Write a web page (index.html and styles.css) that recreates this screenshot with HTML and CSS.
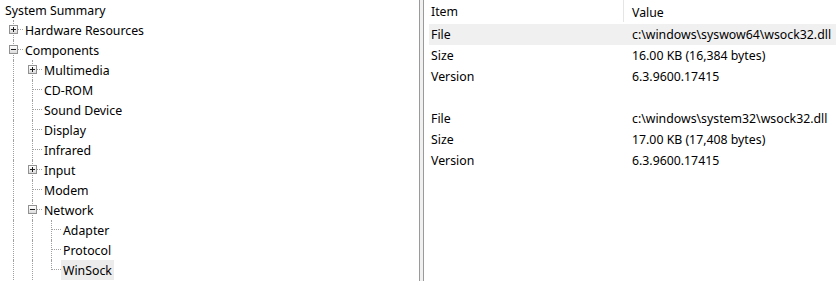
FILE: index.html
```html
<!DOCTYPE html>
<html lang="en">
<head>
  <meta charset="UTF-8">
  <title>System Information</title>
  <link rel="stylesheet" href="styles.css">
</head>
<body>

<div class="window">
  <div class="tree">
    <div class="row root"><span class="label">System Summary</span></div>
    <div class="row"><span class="g"><span class="box plus"></span></span><span class="label">Hardware Resources</span></div>
    <div class="row"><span class="g"><span class="box minus"></span></span><span class="label">Components</span></div>
    <div class="row"><span class="g line"></span><span class="g"><span class="box plus"></span></span><span class="label">Multimedia</span></div>
    <div class="row"><span class="g line"></span><span class="g"></span><span class="label">CD-ROM</span></div>
    <div class="row"><span class="g line"></span><span class="g"></span><span class="label">Sound Device</span></div>
    <div class="row"><span class="g line"></span><span class="g"></span><span class="label">Display</span></div>
    <div class="row"><span class="g line"></span><span class="g"></span><span class="label">Infrared</span></div>
    <div class="row"><span class="g line"></span><span class="g"><span class="box plus"></span></span><span class="label">Input</span></div>
    <div class="row"><span class="g line"></span><span class="g"></span><span class="label">Modem</span></div>
    <div class="row"><span class="g line"></span><span class="g"><span class="box minus"></span></span><span class="label">Network</span></div>
    <div class="row"><span class="g line"></span><span class="g line"></span><span class="g"></span><span class="label">Adapter</span></div>
    <div class="row"><span class="g line"></span><span class="g line"></span><span class="g"></span><span class="label">Protocol</span></div>
    <div class="row"><span class="g line"></span><span class="g line"></span><span class="g elbow"></span><span class="label selected">WinSock</span></div>
  </div>

  <div class="splitter"></div>

  <div class="details">
    <div class="header">
      <div class="col first">Item</div>
      <div class="col">Value</div>
    </div>
    <div class="items">
      <div class="item hot"><span>File</span><span>c:\windows\syswow64\wsock32.dll</span></div>
      <div class="item"><span>Size</span><span>16.00 KB (16,384 bytes)</span></div>
      <div class="item"><span>Version</span><span>6.3.9600.17415</span></div>
      <div class="item"><span></span><span></span></div>
      <div class="item"><span>File</span><span>c:\windows\system32\wsock32.dll</span></div>
      <div class="item"><span>Size</span><span>17.00 KB (17,408 bytes)</span></div>
      <div class="item"><span>Version</span><span>6.3.9600.17415</span></div>
    </div>
  </div>
</div>

</body>
</html>
```

FILE: styles.css
```css
body {
  margin: 0;
  background-color: #fff;
  color: #000;
  font-family: "Noto Sans", "Open Sans", sans-serif;
  font-size: 12.3px;
}
.window {
  display: flex;
  height: 281px;
  overflow: hidden;
}
.tree {
  width: 419px;
  flex: none;
  padding-left: 4px;
  box-sizing: border-box;
  background-color: #fff;
}
.row {
  display: flex;
  height: 20px;
  align-items: center;
}
.root {
  margin-left: -1px;
}
.label {
  padding: 2px 2px 0;
  line-height: 18px;
  white-space: nowrap;
}
.label.selected {
  background-color: #ececec;
}
.g {
  display: grid;
  grid-template-columns: 10px 9px;
  grid-template-rows: 10px 10px;
  width: 19px;
  height: 20px;
  flex: none;
}
.g::before {
  content: "";
  grid-column: 1;
  grid-row: 1 / 3;
  border-right: 1px dotted #a0a0a0;
}
.g::after {
  content: "";
  grid-column: 2;
  grid-row: 1;
  border-bottom: 1px dotted #a0a0a0;
}
.g.line::after {
  display: none;
}
.g.elbow::before {
  grid-row: 1;
}
.box {
  grid-column: 1 / 3;
  grid-row: 1 / 3;
  align-self: start;
  justify-self: start;
  margin: 5px 0 0 5px;
  width: 9px;
  height: 9px;
  box-sizing: border-box;
  border: 1px solid #919191;
  z-index: 1;
}
.box.plus {
  background:
    linear-gradient(#1e1e1e, #1e1e1e) center / 5px 1px no-repeat,
    linear-gradient(#1e1e1e, #1e1e1e) center / 1px 5px no-repeat,
    linear-gradient(#fff, #dcdcdc);
}
.box.minus {
  background:
    linear-gradient(#1e1e1e, #1e1e1e) center / 5px 1px no-repeat,
    linear-gradient(#fff, #dcdcdc);
}
.splitter {
  width: 3px;
  flex: none;
  background-color: #f0f0f0;
  border-left: 1px solid #9a9a9a;
  border-right: 1px solid #9a9a9a;
}
.details {
  flex: 1;
  background-color: #fff;
}
.header {
  display: flex;
  height: 24px;
  align-items: stretch;
}
.header .col {
  padding-top: 1px;
  line-height: 23px;
  padding-left: 8px;
}
.header .first {
  width: 200px;
  box-sizing: border-box;
  padding-left: 7px;
  border-right: 1px solid #e5e5e5;
  margin-bottom: 2px;
  line-height: 21px;
}
.items {
  margin-left: 5px;
}
.item {
  display: grid;
  grid-template-columns: 201px 1fr;
  height: 21px;
  box-sizing: border-box;
  padding: 1px 0 0 2px;
  line-height: 20px;
  white-space: nowrap;
}
.item.hot {
  background-color: #f0f0f0;
}
```
